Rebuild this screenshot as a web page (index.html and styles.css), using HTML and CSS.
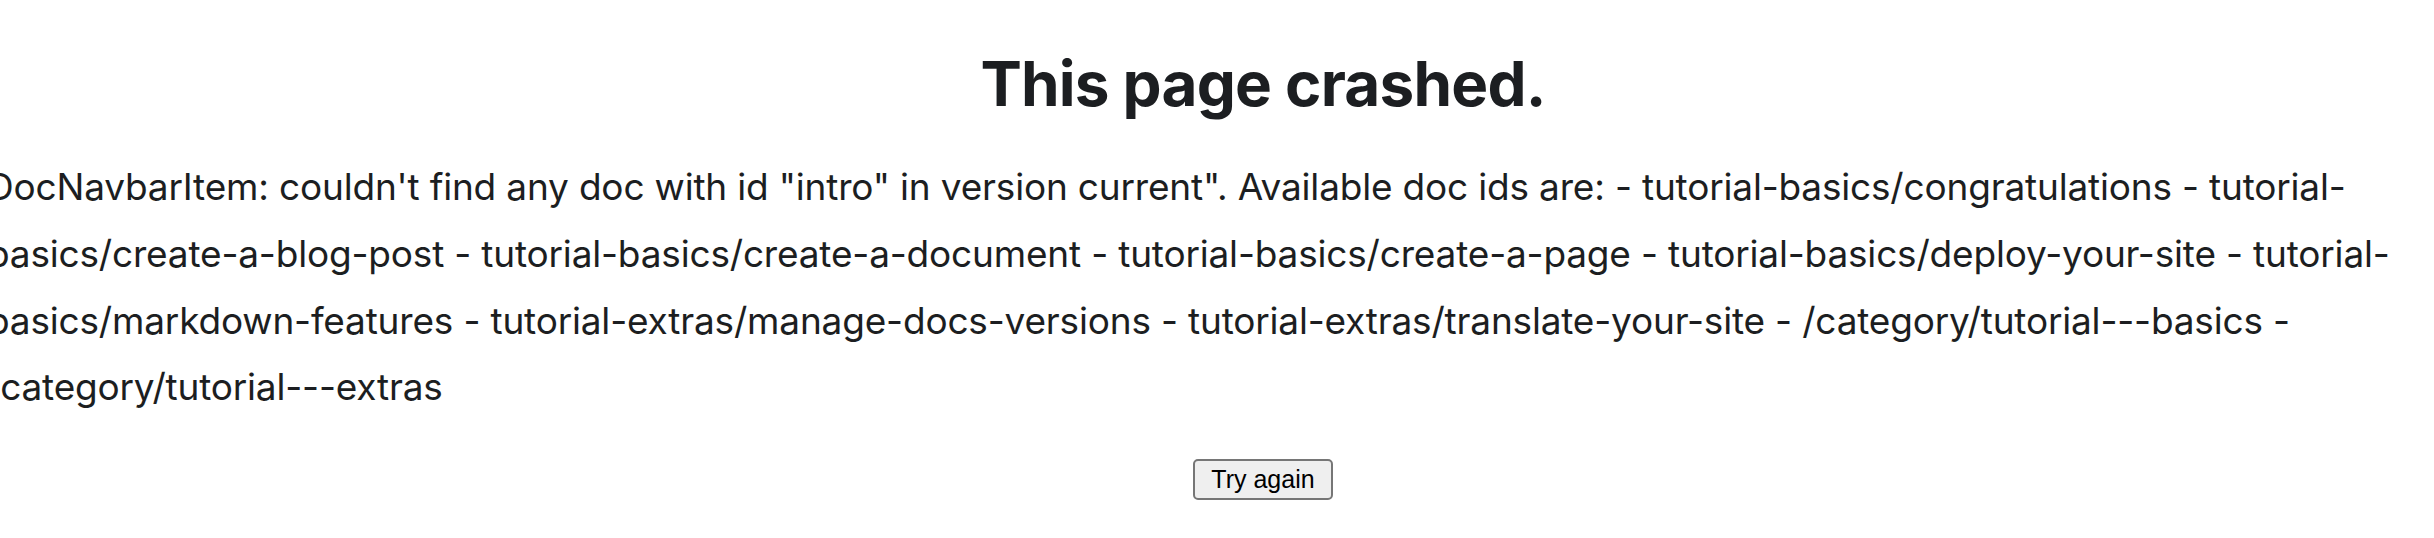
FILE: index.html
```html
<!DOCTYPE html>
<html lang="en">
<head>
<meta charset="utf-8">
<title>This page crashed.</title>
<link rel="stylesheet" href="styles.css">
</head>
<body>
<main class="crash">
  <h1 class="crash-title">This page crashed.</h1>
  <p class="crash-message">DocNavbarItem: couldn't find any doc with id "intro" in version current". Available doc ids are: - tutorial-basics/congratulations - tutorial-basics/create-a-blog-post - tutorial-basics/create-a-document - tutorial-basics/create-a-page - tutorial-basics/deploy-your-site - tutorial-basics/markdown-features - tutorial-extras/manage-docs-versions - tutorial-extras/translate-your-site - /category/tutorial---basics - /category/tutorial---extras</p>
  <div class="crash-actions">
    <button class="retry" type="button">Try again</button>
  </div>
</main>
</body>
</html>
```
FILE: styles.css
```css
html, body {
  margin: 0;
  padding: 0;
  background: #ffffff;
  overflow: hidden;
}

body {
  color: #1c1e21;
  font-family: Inter, "Noto Sans", sans-serif;
}

.crash {
  width: 2526px;
}

.crash-title {
  margin: 47px 0 0;
  font-size: 62px;
  font-weight: 700;
  line-height: 1.2;
  text-align: center;
  letter-spacing: -0.8px;
}

.crash-message {
  margin: 33px 0 0 -13px;
  width: 2460px;
  font-size: 37px;
  line-height: 66.67px;
  letter-spacing: -0.18px;
}

.crash-actions {
  margin-top: 38px;
  text-align: center;
}

.retry {
  height: 41px;
  padding: 0 16px;
  font-family: "Liberation Sans", Arial, sans-serif;
  font-size: 25px;
  color: #000000;
  background: #efefef;
  border: 2px solid #767676;
  border-radius: 5px;
}
```
